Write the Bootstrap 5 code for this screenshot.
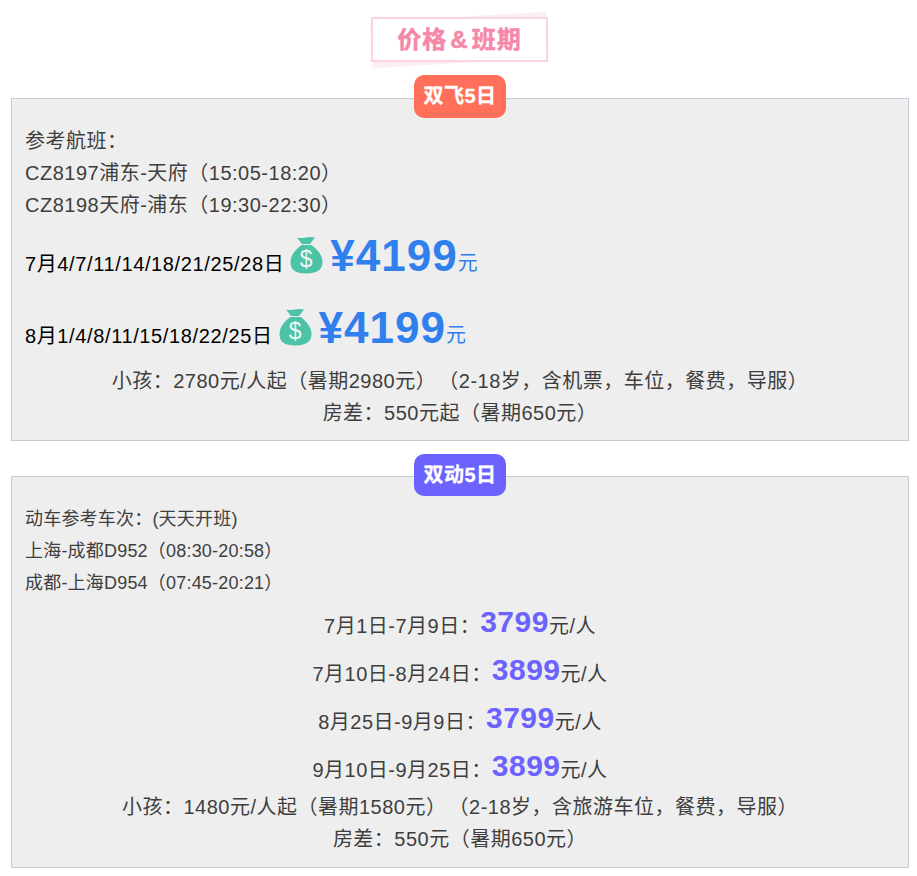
<!doctype html>
<html lang="zh"><head><meta charset="utf-8">
<link href="https://cdn.jsdelivr.net/npm/bootstrap@5.3.0/dist/css/bootstrap.min.css" rel="stylesheet">
<style>
body{background:#fff;font-family:"Liberation Sans","Noto Sans CJK SC",sans-serif;color:#3e3e3e;font-size:20px;line-height:32px;letter-spacing:.5px}
.page-wrap{padding:17px 8px 0 11px}
.title-holder{width:177px;height:45px;margin:0 0 36px 360px;position:relative}
.title-back{position:absolute;left:0;top:0;width:177px;height:46px;background:#fdeef2;transform:rotate(-3.5deg)}
.title-front{position:absolute;inset:0;background:#fff;border:2px solid #fcd3e0;color:#f687a8;font-weight:700;font-size:24px;line-height:41px;text-align:center;letter-spacing:1px;-webkit-text-stroke:.5px #f687a8}
.title-front .amp{margin:0 3px}
.info-box{background:#eee;border:1px solid #c3ccd6;position:relative}
.box-a{height:343px;padding:26px 13px 0;margin-bottom:35px}
.box-b{height:392px;padding:26px 13px 0}
.tag-pill{position:absolute;left:402px;width:92px;height:43px;border-radius:10px;color:#fff;font-weight:700;font-size:20px;line-height:43px;text-align:center;-webkit-text-stroke:.3px #fff}
.box-a .tag-pill{top:-24px;background:#ff6f59}
.box-b .tag-pill{top:-23px;height:42px;line-height:42px;background:#6c63ff}
.fare-row{color:#000;height:72px;display:flex;align-items:flex-end;padding-bottom:7px}
.fare-date{margin-bottom:6px;letter-spacing:.625px}
.fare-row svg{margin:0 6px 12px 6px;flex:none}
.big-price{color:#2f7fec;font-weight:700;font-size:44px;line-height:44px;letter-spacing:1px}
.big-price small{font-weight:400;font-size:20px;color:#2f7fec;position:relative;top:-1px}
.sm-lines{font-size:18px;letter-spacing:.2px}
.date-row{text-align:center;height:48px;line-height:46px}
.vio{color:#6c63ff;font-weight:700;font-size:30px;vertical-align:1px}
.kid-line{word-spacing:-4px}
</style></head><body>
<div class="page-wrap">
<div class="title-holder"><div class="title-back"></div><div class="title-front">价格<span class="amp">&amp;</span>班期</div></div>
<div class="info-box box-a">
<div class="tag-pill">双飞5日</div>
<div>参考航班：</div><div>CZ8197浦东-天府（15:05-18:20）</div><div>CZ8198天府-浦东（19:30-22:30）</div>
<div class="fare-row"><span class="fare-date">7月4/7/11/14/18/21/25/28日</span>
<svg width="34" height="38" viewBox="0 0 34 38"><path d="M7 1.500c3 .8 5 .8 9 0s6-.8 9 0l-5 6.500h-8z" fill="#4cc2a6"/><path d="M11.500 9h10C27 13 32.500 19 32.500 26c0 8-6 11.500-16.500 11.500S.5 34 .5 26C.5 19 6 13 11.500 9z" fill="#4cc2a6"/><text x="16.500" y="31" text-anchor="middle" font-family="Liberation Sans" font-size="23" fill="#eaf7f3">$</text></svg>
<span class="big-price">¥4199<small>元</small></span></div>
<div class="fare-row"><span class="fare-date">8月1/4/8/11/15/18/22/25日</span>
<svg width="34" height="38" viewBox="0 0 34 38"><path d="M7 1.500c3 .8 5 .8 9 0s6-.8 9 0l-5 6.500h-8z" fill="#4cc2a6"/><path d="M11.500 9h10C27 13 32.500 19 32.500 26c0 8-6 11.500-16.500 11.500S.5 34 .5 26C.5 19 6 13 11.500 9z" fill="#4cc2a6"/><text x="16.500" y="31" text-anchor="middle" font-family="Liberation Sans" font-size="23" fill="#eaf7f3">$</text></svg>
<span class="big-price">¥4199<small>元</small></span></div>
<div class="text-center kid-line">小孩：2780元/人起（暑期2980元）&nbsp;（2-18岁，含机票，车位，餐费，导服）</div>
<div class="text-center">房差：550元起（暑期650元）</div>
</div>
<div class="info-box box-b">
<div class="tag-pill">双动5日</div>
<div class="sm-lines"><div>动车参考车次：(天天开班)</div><div>上海-成都D952（08:30-20:58）</div><div>成都-上海D954（07:45-20:21）</div></div>
<div class="date-row">7月1日-7月9日：<span class="vio">3799</span>元/人</div>
<div class="date-row">7月10日-8月24日：<span class="vio">3899</span>元/人</div>
<div class="date-row">8月25日-9月9日：<span class="vio">3799</span>元/人</div>
<div class="date-row">9月10日-9月25日：<span class="vio">3899</span>元/人</div>
<div class="text-center kid-line">小孩：1480元/人起（暑期1580元）&nbsp;（2-18岁，含旅游车位，餐费，导服）</div>
<div class="text-center">房差：550元（暑期650元）</div>
</div>
</div>
<script src="https://cdn.jsdelivr.net/npm/bootstrap@5.3.0/dist/js/bootstrap.bundle.min.js"></script>
</body></html>
